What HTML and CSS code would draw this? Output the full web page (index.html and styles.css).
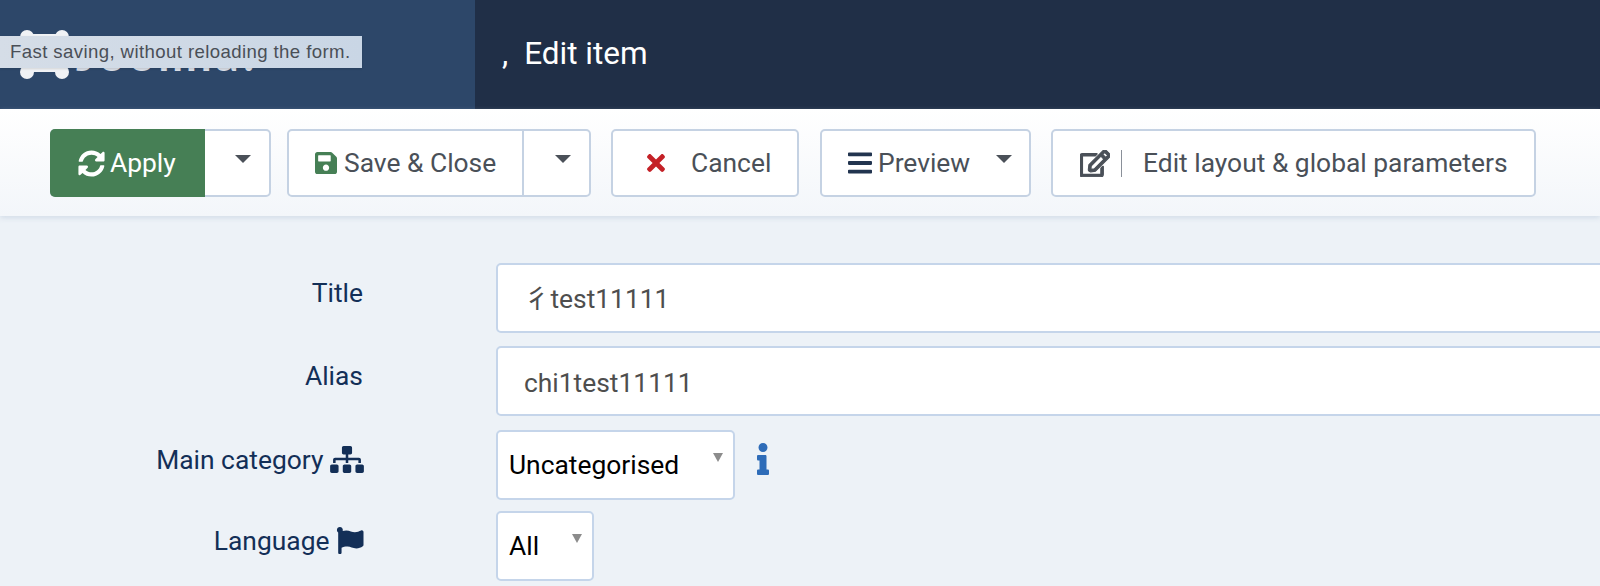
FILE: index.html
```html
<!DOCTYPE html>
<html lang="en">
<head>
<meta charset="utf-8">
<title>Edit item</title>
<link rel="stylesheet" href="styles.css">
</head>
<body>
<header class="topbar">
  <div class="brand">
    <svg class="brand-mark" viewBox="0 0 60 60" aria-hidden="true">
      <circle cx="10" cy="8" r="7"/><circle cx="45" cy="8" r="7"/><circle cx="10" cy="43" r="7"/><circle cx="45" cy="43" r="7"/>
      <rect x="8" y="5" width="39" height="38" rx="6"/>
    </svg>
    <span class="brand-name">Joomla!</span>
  </div>
  <h1 class="page-title">,<span class="page-title-text">Edit item</span></h1>
</header>
<div class="tooltip">Fast saving, without reloading the form.</div>
<nav class="toolbar">
  <div class="btn btn-apply">
    <span class="btn-main">
      <svg class="ico ico-sync" viewBox="0 0 512 512"><path d="M370.72 133.28C339.458 104.008 298.888 87.962 255.848 88c-77.458.068-144.328 53.178-162.791 126.85-1.344 5.363-6.122 9.15-11.651 9.15H24.103c-7.498 0-13.194-6.807-11.807-14.176C33.933 94.924 134.813 8 256 8c66.448 0 126.791 26.136 171.315 68.685L463.03 40.97C478.149 25.851 504 36.559 504 57.941V192c0 13.255-10.745 24-24 24H345.941c-21.382 0-32.09-25.851-16.971-40.971l41.75-41.749zM32 296h134.059c21.382 0 32.09 25.851 16.971 40.971l-41.75 41.75c31.262 29.273 71.835 45.319 114.876 45.28 77.418-.07 144.315-53.144 162.787-126.849 1.344-5.363 6.122-9.15 11.651-9.15h57.304c7.498 0 13.194 6.807 11.807 14.176C478.067 417.076 377.187 504 256 504c-66.448 0-126.791-26.136-171.315-68.685L48.97 471.03C33.851 486.149 8 475.441 8 454.059V320c0-13.255 10.745-24 24-24z"/></svg>
      Apply
    </span>
    <span class="btn-caret"><i class="caret"></i></span>
  </div>
  <div class="btn btn-save">
    <span class="btn-main">
      <svg class="ico ico-save" viewBox="0 0 448 512"><path d="M433.941 129.941l-83.882-83.882A48 48 0 0 0 316.118 32H48C21.49 32 0 53.49 0 80v352c0 26.51 21.49 48 48 48h352c26.51 0 48-21.49 48-48V163.882a48 48 0 0 0-14.059-33.941zM224 416c-35.346 0-64-28.654-64-64 0-35.346 28.654-64 64-64s64 28.654 64 64c0 35.346-28.654 64-64 64zm96-304.52V212c0 6.627-5.373 12-12 12H76c-6.627 0-12-5.373-12-12V108c0-6.627 5.373-12 12-12h228.52c3.183 0 6.235 1.264 8.485 3.515l3.48 3.48A11.996 11.996 0 0 1 320 111.48z"/></svg>
      Save &amp; Close
    </span>
    <span class="btn-caret"><i class="caret"></i></span>
  </div>
  <div class="btn btn-cancel">
    <svg class="ico ico-times" viewBox="0 0 352 512"><path d="M242.72 256l100.07-100.07c12.28-12.28 12.28-32.19 0-44.48l-22.24-22.24c-12.28-12.28-32.19-12.28-44.48 0L176 189.28 75.93 89.21c-12.28-12.28-32.19-12.28-44.48 0L9.21 111.45c-12.28 12.28-12.28 32.19 0 44.48L109.28 256 9.21 356.07c-12.28 12.28-12.28 32.19 0 44.48l22.24 22.24c12.28 12.28 32.2 12.28 44.48 0L176 322.72l100.07 100.07c12.28 12.28 32.2 12.28 44.48 0l22.24-22.24c12.28-12.28 12.28-32.19 0-44.48L242.72 256z"/></svg>
    Cancel
  </div>
  <div class="btn btn-preview">
    <svg class="ico ico-bars" viewBox="0 0 448 512"><path d="M16 132h416c8.837 0 16-7.163 16-16V76c0-8.837-7.163-16-16-16H16C7.163 60 0 67.163 0 76v40c0 8.837 7.163 16 16 16zm0 160h416c8.837 0 16-7.163 16-16v-40c0-8.837-7.163-16-16-16H16c-8.837 0-16 7.163-16 16v40c0 8.837 7.163 16 16 16zm0 160h416c8.837 0 16-7.163 16-16v-40c0-8.837-7.163-16-16-16H16c-8.837 0-16 7.163-16 16v40c0 8.837 7.163 16 16 16z"/></svg>
    Preview
    <i class="caret caret-preview"></i>
  </div>
  <div class="btn btn-edit">
    <svg class="ico ico-edit" viewBox="0 0 576 512"><path d="M402.3 344.9l32-32c5-5 13.7-1.5 13.7 5.7V464c0 26.5-21.5 48-48 48H48c-26.5 0-48-21.5-48-48V112c0-26.5 21.5-48 48-48h273.5c7.1 0 10.7 8.6 5.7 13.7l-32 32c-1.5 1.5-3.5 2.3-5.7 2.3H48v352h352V350.5c0-2.1.8-4.1 2.3-5.6zm156.6-201.8L296.3 405.7l-90.4 10c-26.2 2.9-48.5-19.2-45.6-45.6l10-90.4L432.9 17.1c22.9-22.9 59.9-22.9 82.7 0l43.2 43.2c22.9 22.9 22.9 60 .1 82.8zM460.1 174L402 115.9 216.2 301.8l-7.3 65.3 65.3-7.3L460.1 174zm64.8-79.7l-43.2-43.2c-4.1-4.1-10.8-4.1-14.8 0L436 82l58.1 58.1 30.9-30.9c4-4.2 4-10.8-.1-14.9z"/></svg>
    <span class="edit-sep"></span>
    Edit layout &amp; global parameters
  </div>
</nav>
<main class="form">
  <div class="row row-title">
    <label class="label">Title</label>
    <div class="field"><div class="input">彳test11111</div></div>
  </div>
  <div class="row row-alias">
    <label class="label">Alias</label>
    <div class="field"><div class="input">chi1test11111</div></div>
  </div>
  <div class="row row-cat">
    <label class="label">Main category
      <svg class="ico-label ico-sitemap" viewBox="0 0 640 512"><path d="M128 352H32c-17.67 0-32 14.33-32 32v96c0 17.67 14.33 32 32 32h96c17.67 0 32-14.33 32-32v-96c0-17.67-14.33-32-32-32zm-24-80h192v48h48v-48h192v48h48v-57.59c0-21.17-17.23-38.41-38.41-38.41H344v-64h40c17.67 0 32-14.33 32-32V32c0-17.67-14.33-32-32-32H256c-17.67 0-32 14.33-32 32v96c0 17.67 14.33 32 32 32h40v64H94.41C73.23 224 56 241.23 56 262.41V320h48v-48zm264 80h-96c-17.67 0-32 14.33-32 32v96c0 17.67 14.33 32 32 32h96c17.67 0 32-14.33 32-32v-96c0-17.67-14.33-32-32-32zm240 0h-96c-17.67 0-32 14.33-32 32v96c0 17.67 14.33 32 32 32h96c17.67 0 32-14.33 32-32v-96c0-17.67-14.33-32-32-32z"/></svg>
    </label>
    <div class="field">
      <div class="select select-cat">Uncategorised<i class="select-arrow"></i></div>
      <svg class="ico-info" viewBox="0 0 192 512"><path d="M20 424.229h20V279.771H20c-11.046 0-20-8.954-20-20V212c0-11.046 8.954-20 20-20h112c11.046 0 20 8.954 20 20v212.229h20c11.046 0 20 8.954 20 20V492c0 11.046-8.954 20-20 20H20c-11.046 0-20-8.954-20-20v-47.771c0-11.046 8.954-20 20-20zM96 0C56.235 0 24 32.235 24 72s32.235 72 72 72 72-32.235 72-72S135.764 0 96 0z"/></svg>
    </div>
  </div>
  <div class="row row-lang">
    <label class="label">Language
      <svg class="ico-label ico-flag" viewBox="0 0 512 512"><path d="M349.565 98.783C295.978 98.783 251.721 64 184.348 64c-24.955 0-47.309 4.384-68.045 12.013a55.947 55.947 0 0 0 3.586-23.562C118.117 24.015 94.806 1.206 66.338.048 34.345-1.254 8 24.296 8 56c0 19.026 9.497 35.825 24 45.945V488c0 13.255 10.745 24 24 24h16c13.255 0 24-10.745 24-24v-94.4c28.311-12.064 63.582-22.122 114.435-22.122 53.588 0 97.844 34.783 165.217 34.783 48.169 0 86.667-16.294 122.505-40.858C506.84 359.452 512 349.571 512 339.045v-243.1c0-23.393-24.269-38.87-45.485-29.016-34.338 15.948-76.454 31.854-116.95 31.854z"/></svg>
    </label>
    <div class="field">
      <div class="select select-lang">All<i class="select-arrow"></i></div>
    </div>
  </div>
</main>
</body>
</html>
```
FILE: styles.css
```css
* { box-sizing: border-box; }
html, body { margin: 0; height: 100%; overflow: hidden; }
body {
  background: #edf2f7;
  font-family: Roboto, "Noto Sans CJK SC", sans-serif;
  font-size: 26.4px;
  position: relative;
}
.topbar {
  display: flex;
  height: 109px;
  background: #202f47;
}
.brand {
  width: 475px;
  flex: none;
  background: #2d4769;
  display: flex;
  align-items: flex-start;
  padding: 29px 0 0 17px;
}
.brand-mark { width: 60px; height: 60px; fill: #f0f2f5; flex: none; }
.brand-name {
  font-family: Lato, sans-serif;
  font-weight: 700;
  font-size: 46px;
  line-height: 46px;
  color: #d9dee6;
  margin: 2px 0 0 -1px;
  width: 185px;
  letter-spacing: 3.5px;
}
.page-title {
  margin: 0;
  padding-left: 27px;
  font-size: 31.5px;
  font-weight: 400;
  line-height: 107px;
  color: #fff;
  display: flex;
}
.page-title-text { margin-left: 16px; }
.tooltip {
  position: absolute;
  left: 0;
  top: 36px;
  width: 362px;
  height: 32px;
  padding-left: 10px;
  font-family: "Liberation Sans", sans-serif;
  font-size: 18.6px;
  letter-spacing: .4px;
  line-height: 32px;
  color: #4a4f57;
  background: linear-gradient(90deg, #d5dde7, #c9d6e5);
  box-shadow: 0 1px 2px rgba(0,0,0,.12);
  white-space: nowrap;
  z-index: 5;
}
.toolbar {
  display: flex;
  height: 107px;
  padding: 20px 0 0 50px;
  background: linear-gradient(#fff, #f3f6fa);
  box-shadow: 0 2px 5px rgba(180,195,215,.45);
  position: relative;
}
.btn {
  height: 68px;
  display: flex;
  align-items: center;
  background: #fff;
  border: 2px solid #c5d2e3;
  border-radius: 5px;
  color: #4a5058;
  flex: none;
  white-space: nowrap;
}
.btn-main { display: flex; align-items: center; height: 100%; }
.btn-caret { flex: 1; display: flex; justify-content: center; align-items: center; height: 100%; padding: 0 0 8px 12px; }
.caret {
  width: 0; height: 0;
  border-left: 8.5px solid transparent;
  border-right: 8.5px solid transparent;
  border-top: 8px solid #4a5058;
}
.ico { flex: none; }
.btn-apply { width: 221px; margin-right: 16px; }
.btn-apply .btn-main {
  width: 155px;
  margin: -2px 0 -2px -2px;
  height: 68px;
  padding-left: 28px;
  background: #467f55;
  border-radius: 5px 0 0 5px;
  color: #fff;
}
.ico-sync { width: 27px; height: 27px; fill: #fff; margin-right: 5px; }
.btn-save { width: 304px; margin-right: 20px; }
.btn-save .btn-main {
  width: 235px;
  padding-left: 26px;
  border-right: 2px solid #c5d2e3;
}
.ico-save { width: 22px; height: 26px; fill: #467f55; margin-right: 7px; }
.btn-cancel { width: 188px; margin-right: 21px; padding-left: 33px; }
.ico-times { width: 20px; height: 26px; fill: #c42127; margin-right: 25px; }
.btn-preview { width: 211px; margin-right: 20px; padding-left: 26px; position: relative; }
.ico-bars { width: 24px; height: 28px; fill: #22344f; margin-right: 6px; }
.caret-preview { margin: -8px 0 0 26px; }
.btn-edit { width: 485px; padding-left: 27px; }
.ico-edit { width: 30px; height: 27px; fill: #4a5058; stroke: #4a5058; stroke-width: 22; margin-right: 11px; }
.edit-sep { width: 1px; height: 27px; background: #8a9099; margin-right: 21px; }
.form { display: flex; flex-direction: column; padding-top: 47px; }
.row { display: flex; height: 70px; }
.row-alias { margin-top: 13px; }
.row-cat { margin-top: 14px; }
.row-lang { margin-top: 11px; }
.label {
  width: 363px;
  flex: none;
  text-align: right;
  color: #132f57;
  line-height: 30px;
  padding-top: 15px;
  white-space: nowrap;
}
.ico-label { fill: #132f57; vertical-align: -4px; margin-right: -1px; }
.ico-sitemap { width: 34px; height: 27px; }
.ico-flag { width: 28px; height: 27px; }
.field {
  margin-left: 133px;
  flex: 1;
  display: flex;
  align-items: flex-start;
  min-width: 0;
}
.input {
  width: 1200px;
  height: 70px;
  flex: none;
  background: #fff;
  border: 2px solid #c5d5ea;
  border-radius: 5px;
  color: #4e4e4e;
  padding: 0 0 0 26px;
  line-height: 69px;
}
.row-alias .input { line-height: 71px; }
.select {
  height: 70px;
  flex: none;
  background: #fff;
  border: 2px solid #c5d5ea;
  border-radius: 5px;
  color: #000;
  padding-left: 11px;
  line-height: 67px;
  position: relative;
}
.select-cat { width: 239px; }
.select-lang { width: 98px; }
.select-arrow {
  position: absolute;
  right: 10px;
  top: 21px;
  width: 0; height: 0;
  border-left: 5px solid transparent;
  border-right: 5px solid transparent;
  border-top: 9px solid #8c8c8c;
}
.ico-info { width: 12px; height: 32px; margin: 13px 0 0 22px; fill: #2e6cb8; }
```
